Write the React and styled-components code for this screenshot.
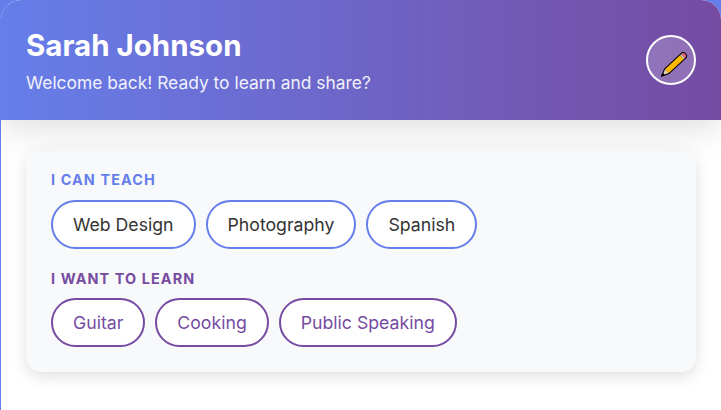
import React from 'react';
import styled, { createGlobalStyle } from 'styled-components';

const GlobalStyle = createGlobalStyle`
  html, body {
    margin: 0;
    padding: 0;
    height: 100%;
    background: #667eea;
    font-family: 'Inter', 'Liberation Sans', sans-serif;
    overflow: hidden;
  }
`;

const Card = styled.div`
  margin-left: 1px;
  height: 410px;
  background: #ffffff;
  border-radius: 20px 20px 0 0;
  overflow: hidden;
`;

const Header = styled.header`
  position: relative;
  height: 120px;
  box-sizing: border-box;
  padding: 0 25px;
  display: flex;
  justify-content: space-between;
  align-items: center;
  color: #fff;
  background: linear-gradient(90deg, #667eea 0%, #764ba2 100%);
  box-shadow: 0 10px 30px rgba(0, 0, 0, 0.12);
`;

const Name = styled.h1`
  margin: 0 0 9px;
  font-size: 29.5px;
  line-height: 36px;
  font-weight: 700;
`;

const Subtitle = styled.p`
  margin: 0;
  font-size: 17.4px;
  opacity: 0.9;
`;

const EditButton = styled.button`
  width: 50px;
  height: 50px;
  padding: 0;
  box-sizing: border-box;
  border: 2px solid #fff;
  border-radius: 50%;
  background: rgba(255, 255, 255, 0.2);
  display: flex;
  align-items: center;
  justify-content: center;
`;

const PencilIcon = styled.svg`
  overflow: visible;
`;

const Content = styled.main`
  padding: 27px 25px 0;
`;

const Panel = styled.section`
  background: #f8f9fa;
  border-radius: 15px;
  padding: 24px 25px 4px;
  box-shadow: 0 5px 15px rgba(0, 0, 0, 0.12);
`;

const Label = styled.h3`
  margin: 0 0 11.5px;
  font-size: 14.4px;
  font-weight: 700;
  letter-spacing: 1.1px;
  text-transform: uppercase;
  color: ${(p) => p.$color};
`;

const Chips = styled.div`
  display: flex;
  gap: 10px;
  margin-bottom: 21px;
`;

const Chip = styled.span`
  box-sizing: border-box;
  padding: 12px 20px;
  background: #fff;
  border: 2px solid ${(p) => p.$border};
  border-radius: 25px;
  font-size: 17.68px;
  color: ${(p) => p.$color};
`;

const Pencil = () => (
  <PencilIcon width="30" height="30" viewBox="0 0 30 30">
    <g transform="translate(2.5 5) rotate(47 15 15)">
      <path d="M11.8 1 Q11.8 -1.5 15 -1.5 Q18.2 -1.5 18.2 1 V24 L15 31.5 L11.8 24 Z" fill="#000" stroke="#000" strokeWidth="1" strokeLinejoin="round" />
      <path d="M12.3 2 V1 Q12.3 -1 15 -1 Q17.7 -1 17.7 1 V2 Z" fill="#ea6a7c" />
      <rect x="12.3" y="2" width="5.4" height="1.6" fill="#c9cdd2" />
      <rect x="12.3" y="3.6" width="5.4" height="20.4" fill="#ffb900" />
      <path d="M12.3 24 H17.7 L15.8 28 H14.2 Z" fill="#e8cfa8" />
    </g>
  </PencilIcon>
);

const teach = ['Web Design', 'Photography', 'Spanish'];
const learn = ['Guitar', 'Cooking', 'Public Speaking'];

export default function App() {
  return (
    <>
      <GlobalStyle />
      <Card>
        <Header>
          <div>
            <Name>Sarah Johnson</Name>
            <Subtitle>Welcome back! Ready to learn and share?</Subtitle>
          </div>
          <EditButton aria-label="Edit profile">
            <Pencil />
          </EditButton>
        </Header>
        <Content>
          <Panel>
            <Label $color="#667eea">I can teach</Label>
            <Chips>
              {teach.map((s) => (
                <Chip key={s} $border="#667eea" $color="#333333">{s}</Chip>
              ))}
            </Chips>
            <Label $color="#764ba2">I want to learn</Label>
            <Chips>
              {learn.map((s) => (
                <Chip key={s} $border="#764ba2" $color="#764ba2">{s}</Chip>
              ))}
            </Chips>
          </Panel>
        </Content>
      </Card>
    </>
  );
}
